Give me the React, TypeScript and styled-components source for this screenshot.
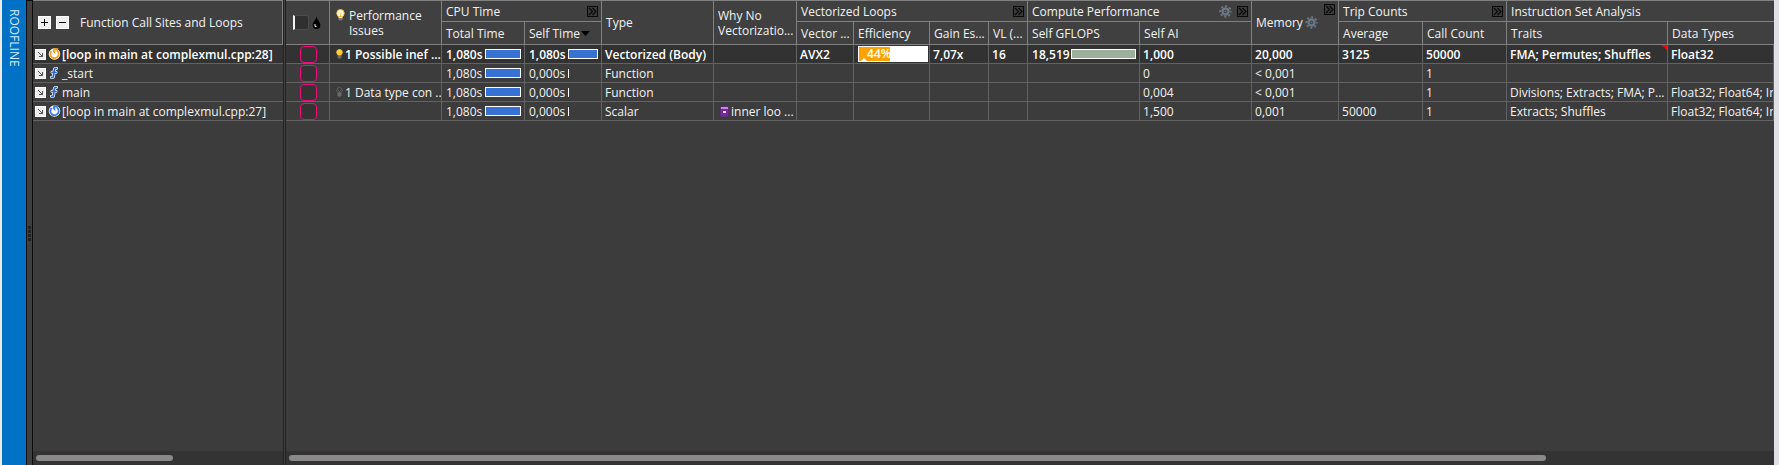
import React from "react";
import styled, { createGlobalStyle } from "styled-components";

const GlobalStyle = createGlobalStyle`
  *, *::before, *::after { box-sizing: border-box; }
  body {
    margin: 0;
    background: #3c3c3c;
    color: #f2f2f2;
    font-family: "Open Sans", "Noto Sans", sans-serif;
    font-size: 12px;
    line-height: 15px;
  }
  button, input { font: inherit; color: inherit; margin: 0; padding: 0; }
`;

const Window = styled.div`
  display: flex;
  height: 100vh;
  padding: 0 5px 0 2px;
  background: linear-gradient(to right, #ececec 50%, #e0e1e6 50%);
`;

const RooflineTab = styled.button`
  flex: none;
  width: 24px;
  padding-top: 9px;
  border: 0;
  background: #0071c5;
  color: #d9eaf7;
  writing-mode: vertical-rl;
  text-align: start;
`;

const Handle = styled.div`
  flex: none;
  display: flex;
  flex-direction: column;
  align-items: center;
  justify-content: center;
  gap: 1px;
  width: 7px;
  border: solid #0c0c0c;
  border-width: 1px 1px 0;
  background: #404040;
`;

const Grip = styled.i`
  width: 3px;
  height: 3px;
  background: #232323;
`;

const Pane = styled.section<{ $width?: number }>`
  display: flex;
  flex-direction: column;
  flex: ${(p) => (p.$width ? `0 0 ${p.$width}px` : "1 1 0")};
  min-width: 0;
  background: #3c3c3c;
`;

const Splitter = styled.div`
  flex: none;
  width: 3px;
  border: solid #222;
  border-width: 0 1px;
  background: #404040;
`;

const TableArea = styled.div`
  flex: 1;
  min-height: 0;
  overflow: hidden;
`;

const Table = styled.table`
  width: 100%;
  table-layout: fixed;
  border-collapse: separate;
  border-spacing: 0;
`;

const Th = styled.th<{ $top?: boolean; $last?: boolean }>`
  padding: 0;
  border: solid #818181;
  border-width: ${(p) => (p.$top ? 1 : 0)}px ${(p) => (p.$last ? 0 : 1)}px 1px 0;
  background: #404040;
  font-weight: normal;
  text-align: left;
  white-space: nowrap;
  overflow: hidden;
`;

const heights = { group: 20, sub: 22, full: 43 };

const HeadBox = styled.div<{ $kind: keyof typeof heights }>`
  display: flex;
  align-items: center;
  gap: 5px;
  height: ${(p) => heights[p.$kind]}px;
  padding: 0 3px 0 4px;
`;

const Grow = styled.span`
  flex: 1;
`;

const Corner = styled.span`
  align-self: flex-start;
  display: flex;
  margin: 3px 0 0 auto;
`;

const ExpandButton = styled.button`
  display: flex;
  flex: none;
  width: 11px;
  height: 11px;
  border: 1px solid #0a0a0a;
  background: #3a3a3a;
`;

const GearButton = styled.button`
  display: flex;
  flex: none;
  border: 0;
  background: none;
`;

const SortLabel = styled.button`
  display: flex;
  align-items: center;
  gap: 1px;
  border: 0;
  background: none;
`;

const TreeButton = styled.button`
  display: flex;
  width: 13px;
  height: 13px;
  border: 1px solid #fff;
  background: #efefef;
`;

const TreeHead = styled(HeadBox)`
  padding-left: 5px;
`;

const TreeTitle = styled.span`
  padding-left: 6px;
`;

const IssuesHead = styled(HeadBox)`
  gap: 4px;
`;

const MemoryHead = styled(HeadBox)`
  gap: 2px;
`;

const BulbSlot = styled.span`
  display: flex;
  align-self: flex-start;
  flex: none;
  padding: 8px 0 0 2px;
`;

const Row = styled.tr<{ $selected?: boolean }>`
  background: ${(p) => (p.$selected ? "#323232" : "transparent")};
  color: ${(p) => (p.$selected ? "#fff" : "inherit")};
  font-weight: ${(p) => (p.$selected ? 600 : 400)};
`;

const Td = styled.td<{ $flush?: boolean }>`
  position: relative;
  height: 19px;
  padding: 0 0 0 ${(p) => (p.$flush ? 0 : 3)}px;
  border: solid #626262;
  border-width: 0 ${(p) => (p.$flush ? 0 : 1)}px 1px 0;
  white-space: nowrap;
  overflow: hidden;
`;

const CellBox = styled.div`
  display: flex;
  align-items: center;
  height: 18px;
  padding-left: 1px;
`;

const TreeCell = styled(CellBox)`
  padding-left: 2px;
`;

const IssueCell = styled(CellBox)`
  padding-left: 0;
`;

const IconSlot = styled.span<{ $w: number }>`
  display: flex;
  justify-content: center;
  flex: none;
  width: ${(p) => p.$w}px;
`;

const Disclosure = styled.button`
  display: flex;
  flex: none;
  width: 11px;
  height: 11px;
  border: 1px solid #fff;
  background: #ececec;
`;

const Value = styled.span`
  flex: none;
  width: 39px;
`;

const Bar = styled.span<{ $fill: string }>`
  flex: 1;
  height: 10px;
  margin-right: 3px;
  border: 1px solid #fff;
  background: ${(p) => p.$fill};
`;

const ZeroBar = styled.span`
  width: 1px;
  height: 9px;
  background: #fff;
`;

const Efficiency = styled.div`
  position: relative;
  flex: 1;
  height: 16px;
  margin-right: 1px;
  padding-left: 8px;
  border: 1px solid #fff;
  background: linear-gradient(to right, #ffa200 45%, #fff 45%);
  line-height: 13px;
`;

const EfficiencyMark = styled.i`
  position: absolute;
  left: 1px;
  bottom: -1px;
  border: solid transparent;
  border-width: 0 4px 4px;
  border-bottom-color: #fff;
`;

const Flag = styled.i`
  position: absolute;
  top: 0;
  right: 0;
  border: solid transparent;
  border-width: 0 6px 5px 0;
  border-right-color: #f00;
`;

const Mark = styled.input`
  display: block;
  appearance: none;
  width: 17px;
  height: 17px;
  border: 1px solid #f0087f;
  border-radius: 4px;
  background: #333;
`;

const HeadMark = styled.input`
  appearance: none;
  width: 16px;
  height: 15px;
  border: 1px solid #4b4b4b;
  border-left: 2px solid #f2f2f2;
  border-radius: 0 3px 3px 0;
  background: #303030;
`;

const MarkHead = styled(HeadBox)`
  gap: 3px;
  padding-left: 7px;
`;

const MarkCell = styled(CellBox)`
  justify-content: center;
  padding: 0 1px 0 0;
`;

const ScrollTrack = styled.div`
  flex: none;
  height: 14px;
  padding: 4px 3px;
  background: #333;
`;

const ScrollThumb = styled.div<{ $size: string }>`
  width: ${(p) => p.$size};
  height: 6px;
  border-radius: 3px;
  background: #8a8888;
`;

const Chevrons = () => (
  <svg width="9" height="9" viewBox="0 0 9 9" fill="none" stroke="#0a0a0a" strokeWidth="1.2">
    <path d="M1 1l3.5 3.5L1 8M4.5 1L8 4.5 4.5 8" />
  </svg>
);

const Expand = ({ label }: { label: string }) => (
  <ExpandButton aria-label={`Expand ${label}`}>
    <Chevrons />
  </ExpandButton>
);

const Gear = ({ label }: { label: string }) => (
  <GearButton aria-label={`${label} settings`}>
    <svg width="13" height="13" viewBox="0 0 13 13" fill="none" stroke="#6b7784">
      <circle cx="6.5" cy="6.5" r="3" strokeWidth="2.4" />
      <circle cx="6.5" cy="6.5" r="5.3" strokeWidth="1.8" strokeDasharray="2.08 2.08" strokeDashoffset="1.04" />
      <circle cx="6.5" cy="6.5" r="0.8" fill="#6b7784" stroke="none" />
    </svg>
  </GearButton>
);

const HeadBulb = () => (
  <svg width="9" height="12" viewBox="0 0 9 12">
    <circle cx="4.5" cy="4.3" r="3.7" fill="#fffbe0" stroke="#ffc23a" />
    <path d="M3.3 3.5L4.5 5l1.2-1.5M4.5 5v3" stroke="#ffc23a" strokeWidth="0.8" fill="none" />
    <path d="M2.5 8h4v1.5h-4z" fill="#e6e6e6" />
    <path d="M2.5 9.5h4v1l-1 1h-2l-1-1z" fill="#777" />
  </svg>
);

const RowBulb = ({ lit }: { lit: boolean }) => (
  <svg width="7" height="10" viewBox="0 0 7 10">
    <path d="M1.5 6h4v2.5l-1 1.2h-2l-1-1.2z" fill="#6a6a6a" />
    <circle cx="3.5" cy="3.3" r="2.8" fill={lit ? "#ffcb36" : "#3c3c3c"} stroke={lit ? "#ffcb36" : "#6a6a6a"} strokeWidth="0.8" />
    {!lit && <path d="M2 3l1.5 1.5L5 3M3.5 4.5V7" stroke="#6a6a6a" strokeWidth="0.8" fill="none" />}
  </svg>
);

const Drop = () => (
  <svg width="9" height="14" viewBox="0 0 9 14">
    <path d="M4.5 0.5C5 3.5 8.3 6 8.3 9.2a3.8 3.8 0 0 1-7.6 0C0.7 6 4 3.5 4.5 0.5z" fill="#000" />
    <path d="M3 8v2.5h1.5" stroke="#fff" fill="none" />
  </svg>
);

const LoopIcon = ({ color }: { color: string }) => (
  <svg width="13" height="12" viewBox="0 0 13 12" fill="none">
    <circle cx="6.5" cy="6" r="5.8" fill="#fff" />
    <path d="M8.5 2.3A4.2 4.2 0 1 1 3.6 3" stroke={color} strokeWidth="1.8" />
    <path d="M5.7 0.3h5L9 2.2H7.3V6.2L4.6 3.5z" fill={color} />
  </svg>
);

const FunctionIcon = () => (
  <svg width="8" height="12" viewBox="0 0 8 12" fill="none" strokeLinecap="round">
    <path d="M6.5 1.5C4.5 1 4.3 2.5 4.1 4.5L3.7 8.5C3.5 10.4 3 10.8 1.5 10.4M2 5.3h4" stroke="#fff" strokeWidth="3" />
    <path d="M6.5 1.5C4.5 1 4.3 2.5 4.1 4.5L3.7 8.5C3.5 10.4 3 10.8 1.5 10.4M2 5.3h4" stroke="#2c68d2" strokeWidth="1.7" />
  </svg>
);

const InnerLoopIcon = () => (
  <svg width="9" height="11" viewBox="0 0 9 11">
    <path d="M0.5 0.5h8v10h-8z" fill="#7d1fa8" />
    <path d="M1 2h7" stroke="#fff" />
    <path d="M3 6h3" stroke="#fff" strokeWidth="2" />
  </svg>
);

type Tree = { name: string; icon: "hot" | "loop" | "fn" };

const tree: Tree[] = [
  { name: "[loop in main at complexmul.cpp:28]", icon: "hot" },
  { name: "_start", icon: "fn" },
  { name: "main", icon: "fn" },
  { name: "[loop in main at complexmul.cpp:27]", icon: "loop" },
];

type Metrics = {
  issue?: string;
  self: string;
  type: string;
  why?: string;
  isa?: string;
  efficiency?: string;
  gain?: string;
  vl?: string;
  gflops?: string;
  ai: string;
  memory: string;
  average?: string;
  calls: string;
  traits?: string;
  data?: string;
};

const metrics: Metrics[] = [
  {
    issue: "1 Possible inef ...", self: "1,080s", type: "Vectorized (Body)", isa: "AVX2", efficiency: "44%",
    gain: "7,07x", vl: "16", gflops: "18,519", ai: "1,000", memory: "20,000", average: "3125", calls: "50000",
    traits: "FMA; Permutes; Shuffles", data: "Float32",
  },
  { self: "0,000s", type: "Function", ai: "0", memory: "< 0,001", calls: "1" },
  {
    issue: "1 Data type con ..", self: "0,000s", type: "Function", ai: "0,004", memory: "< 0,001", calls: "1",
    traits: "Divisions; Extracts; FMA; P...", data: "Float32; Float64; In",
  },
  {
    self: "0,000s", type: "Scalar", why: "inner loo ...", ai: "1,500", memory: "0,001", average: "50000", calls: "1",
    traits: "Extracts; Shuffles", data: "Float32; Float64; In",
  },
];

const columnWidths = [44, 112, 83, 77, 112, 83, 57, 76, 59, 39, 112, 112, 87, 84, 84, 161];

const Group = ({ label, span, gear, expand = true }: { label: string; span: number; gear?: boolean; expand?: boolean }) => (
  <Th $top $last={!expand} colSpan={span} scope="colgroup">
    <HeadBox $kind="group">
      {label}
      <Grow />
      {gear && <Gear label={label} />}
      {expand && <Expand label={label} />}
    </HeadBox>
  </Th>
);

const Sub = ({ children, last }: { children: React.ReactNode; last?: boolean }) => (
  <Th $last={last} scope="col">
    <HeadBox $kind="sub">{children}</HeadBox>
  </Th>
);

const CallTree = () => (
  <Table>
    <thead>
      <tr>
        <Th $top scope="col">
          <TreeHead $kind="full">
            <TreeButton aria-label="Expand all">
              <svg width="11" height="11" stroke="#000"><path d="M2 5.5h7M5.5 2v7" /></svg>
            </TreeButton>
            <TreeButton aria-label="Collapse all">
              <svg width="11" height="11" stroke="#000"><path d="M2 5.5h7" /></svg>
            </TreeButton>
            <TreeTitle>Function Call Sites and Loops</TreeTitle>
          </TreeHead>
        </Th>
      </tr>
    </thead>
    <tbody>
      {tree.map((t, i) => (
        <Row key={t.name} $selected={i === 0}>
          <Td $flush>
            <TreeCell>
              <Disclosure aria-label={`Open ${t.name}`}>
                <svg width="9" height="9" fill="none" stroke="#555"><path d="M2 2l4.5 4.5M6.5 3v3.5H3" /></svg>
              </Disclosure>
              <IconSlot $w={16}>
                {t.icon === "fn" ? <FunctionIcon /> : <LoopIcon color={t.icon === "hot" ? "#f5a31c" : "#3f7fe0"} />}
              </IconSlot>
              {t.name}
            </TreeCell>
          </Td>
        </Row>
      ))}
    </tbody>
  </Table>
);

const MetricsTable = () => (
  <Table>
    <colgroup>
      {columnWidths.map((w, i) => (
        <col key={i} width={w} />
      ))}
      <col />
    </colgroup>
    <thead>
      <tr>
        <Th $top rowSpan={2} scope="col">
          <MarkHead $kind="full">
            <HeadMark type="checkbox" aria-label="Mark all" />
            <Drop />
          </MarkHead>
        </Th>
        <Th $top rowSpan={2} scope="col">
          <IssuesHead $kind="full">
            <BulbSlot><HeadBulb /></BulbSlot>
            <span>Performance<br />Issues</span>
          </IssuesHead>
        </Th>
        <Group label="CPU Time" span={2} />
        <Th $top rowSpan={2} scope="col"><HeadBox $kind="full">Type</HeadBox></Th>
        <Th $top rowSpan={2} scope="col">
          <HeadBox $kind="full"><span>Why No<br />Vectorizatio...</span></HeadBox>
        </Th>
        <Group label="Vectorized Loops" span={4} />
        <Group label="Compute Performance" span={2} gear />
        <Th $top rowSpan={2} scope="col">
          <MemoryHead $kind="full">
            Memory
            <Gear label="Memory" />
            <Corner><Expand label="Memory" /></Corner>
          </MemoryHead>
        </Th>
        <Group label="Trip Counts" span={2} />
        <Group label="Instruction Set Analysis" span={2} expand={false} />
      </tr>
      <tr>
        <Sub>Total Time</Sub>
        <Sub>
          <SortLabel>
            Self Time
            <svg width="9" height="5"><path d="M0 0h9L4.5 5z" fill="#000" /></svg>
          </SortLabel>
        </Sub>
        <Sub>Vector ...</Sub>
        <Sub>Efficiency</Sub>
        <Sub>Gain Es...</Sub>
        <Sub>VL (...</Sub>
        <Sub>Self GFLOPS</Sub>
        <Sub>Self AI</Sub>
        <Sub>Average</Sub>
        <Sub>Call Count</Sub>
        <Sub>Traits</Sub>
        <Sub last>Data Types</Sub>
      </tr>
    </thead>
    <tbody>
      {metrics.map((m, i) => (
        <Row key={i} $selected={i === 0}>
          <Td>
            <MarkCell><Mark type="checkbox" aria-label={`Mark ${tree[i].name}`} /></MarkCell>
          </Td>
          <Td>
            {m.issue && (
              <IssueCell>
                <IconSlot $w={12}><RowBulb lit={i === 0} /></IconSlot>
                {m.issue}
              </IssueCell>
            )}
          </Td>
          <Td>
            <CellBox><Value>1,080s</Value><Bar $fill="#3572d4" /></CellBox>
          </Td>
          <Td>
            <CellBox>
              <Value>{m.self}</Value>
              {i === 0 ? <Bar $fill="#3572d4" /> : <ZeroBar />}
            </CellBox>
          </Td>
          <Td>{m.type}</Td>
          <Td>
            {m.why && <CellBox><IconSlot $w={13}><InnerLoopIcon /></IconSlot>{m.why}</CellBox>}
          </Td>
          <Td>{m.isa}</Td>
          <Td>
            {m.efficiency && (
              <CellBox>
                <Efficiency>{m.efficiency}<EfficiencyMark /></Efficiency>
              </CellBox>
            )}
          </Td>
          <Td>{m.gain}</Td>
          <Td>{m.vl}</Td>
          <Td>
            {m.gflops && <CellBox><Value>{m.gflops}</Value><Bar $fill="#9caf9a" /></CellBox>}
          </Td>
          <Td>{m.ai}</Td>
          <Td>{m.memory}</Td>
          <Td>{m.average}</Td>
          <Td>{m.calls}</Td>
          <Td>{m.traits}{i === 0 && <Flag />}</Td>
          <Td>{m.data}</Td>
        </Row>
      ))}
    </tbody>
  </Table>
);

export default function App() {
  return (
    <>
      <GlobalStyle />
      <Window>
        <RooflineTab>ROOFLINE</RooflineTab>
        <Handle><Grip /><Grip /><Grip /><Grip /></Handle>
        <Pane $width={250}>
          <TableArea><CallTree /></TableArea>
          <ScrollTrack><ScrollThumb $size="56%" /></ScrollTrack>
        </Pane>
        <Splitter />
        <Pane>
          <TableArea><MetricsTable /></TableArea>
          <ScrollTrack><ScrollThumb $size="84.8%" /></ScrollTrack>
        </Pane>
      </Window>
    </>
  );
}
